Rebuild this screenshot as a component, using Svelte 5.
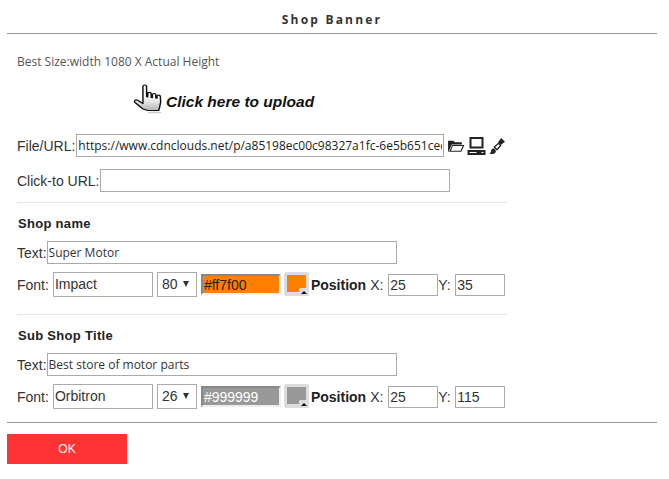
<script>
	let { title = 'Shop Banner' } = $props();

	const sections = [
		{ heading: 'Shop name', text: 'Super Motor', font: 'Impact', size: '80', color: '#ff7f00', ink: '#222', x: '25', y: '35' },
		{ heading: 'Sub Shop Title', text: 'Best store of motor parts', font: 'Orbitron', size: '26', color: '#999999', ink: '#fff', x: '25', y: '115' }
	];
</script>

<div class="dialog">
	<h1>{title}</h1>

	<div class="body">
		<p class="hint">Best Size:width 1080 X Actual Height</p>

		<div class="upload">
			<svg width="34" height="30" viewBox="0 0 28 30" preserveAspectRatio="none">
				<defs>
					<linearGradient id="palm" x1="0" y1="0" x2="0" y2="1">
						<stop offset="0.45" stop-color="#fff" />
						<stop offset="1" stop-color="#b5b5b5" />
					</linearGradient>
				</defs>
				<path d="M9 2.500c0-2 3-2 3 0v10l1 .5V9.500c0-1.600 2.800-1.600 2.800 0v4l1 .2v-3c0-1.600 2.800-1.600 2.800 0v3.300l1 .2v-2c0-1.500 2.700-1.500 2.700 0 .6 3.500.4 8-.7 11.800l-.6 2.500H13L9 25 2.500 18.500c-1.400-1.600.4-3.500 2.200-2.300L9 19.500z" fill="url(#palm)" stroke="#111" stroke-width="1.200" stroke-linejoin="round" />
				<path d="M13 28.500h11" stroke="#ccc" stroke-width="1.500" />
			</svg>
			<span>Click here to upload</span>
		</div>

		<div class="row file-row">
			<label for="file-url">File/URL:</label>
			<input id="file-url" class="url" value="https://www.cdnclouds.net/p/a85198ec00c98327a1fc-6e5b651ced" />
			<span class="tools">
				<svg width="18" height="15" viewBox="0 0 17 14">
					<path d="M1 13V2.500h5l1.500 1.500H14v2H4.500L1.500 13zM2 13h11.500L16.500 6.500H5z" fill="#222" />
					<path d="M5.500 7.500h9.300l-2 4.500H3.700z" fill="#fff" />
				</svg>
				<svg width="21" height="20" viewBox="0 0 20 20">
					<path d="M3 1h14v11.500H3zM5 3v7.500h10V3z" fill="#222" fill-rule="evenodd" />
					<path d="M1 14h18v5H1z" fill="#222" />
					<path d="M3 16h7v1H3zM15 16h2v1h-2z" fill="#fff" />
				</svg>
				<svg width="18" height="18" viewBox="0 0 17 17">
					<path d="M1 15.500c1.500-.2 2-1.500 2-3 .5-1.500 2-2 3.300-1.500l1 1.500c.4 1.500-.3 2.800-2 3.300-1.500.3-3 .2-4.300-.3z" fill="#222" />
					<path d="M6 9.500l4-3.500 2 2-3.500 4z" fill="#fff" stroke="#222" stroke-width="1.200" />
					<path d="M9.500 5l3-4 3.500 3.500-4 3z" fill="#222" />
				</svg>
			</span>
		</div>

		<div class="row link-row">
			<label for="click-url">Click-to URL:</label>
			<input id="click-url" class="link" />
		</div>

		{#each sections as s}
			<section>
				<h2>{s.heading}</h2>
				<div class="row text-row">
					<span>Text:</span>
					<input class="text" value={s.text} />
				</div>
				<div class="row font-row">
					<span>Font:</span>
					<input class="font" value={s.font} />
					<span class="select">{s.size}<i></i></span>
					<input class="color" value={s.color} style="background: {s.color}; color: {s.ink}" />
					<span class="swatch" style="background: {s.color}"><i></i></span>
					<strong>Position</strong>
					<span class="axis-x">X:</span>
					<input class="pos" value={s.x} />
					<span class="axis-y">Y:</span>
					<input class="pos" value={s.y} />
				</div>
			</section>
		{/each}
	</div>

	<div class="footer">
		<button>OK</button>
	</div>
</div>

<style>
	:global(body) {
		background: #fff;
	}

	.dialog {
		width: 650px;
		margin-left: 7px;
		font-family: "Liberation Sans", Arial, sans-serif;
		font-size: 14px;
		color: #333;
	}

	h1 {
		margin: 0;
		height: 33px;
		line-height: 39px;
		box-sizing: content-box;
		border-bottom: 1px solid #999;
		text-align: center;
		font-family: "Open Sans", sans-serif;
		font-size: 12px;
		font-weight: 700;
		letter-spacing: 2.200px;
		color: #333;
	}

	.body {
		padding-left: 10px;
		width: 490px;
	}

	.hint {
		margin: 0;
		padding-top: 20px;
		line-height: 15px;
		font-family: "Open Sans", sans-serif;
		font-size: 12px;
		color: #555;
	}

	.upload {
		display: flex;
		align-items: center;
		height: 37px;
		margin-top: 14px;
		padding-left: 115px;
	}

	.upload svg {
		margin-top: -5px;
	}

	.upload span {
		font-weight: 700;
		font-style: italic;
		font-size: 15.500px;
		color: #111;
	}

	.row {
		display: flex;
		align-items: center;
		white-space: nowrap;
	}

	input {
		box-sizing: border-box;
		border: 1px solid #aaa;
		border-radius: 0;
		outline: none;
		padding: 0 1px;
		margin: 0;
		font-family: "Open Sans", sans-serif;
		font-size: 12px;
		color: #333;
		background: #fff;
	}

	.file-row {
		margin-top: 14px;
		height: 23px;
	}

	.url {
		width: 368px;
		height: 23px;
		margin-left: 1px;
		color: #222;
		overflow: hidden;
	}

	.tools {
		display: flex;
		align-items: center;
		gap: 1px;
		margin-left: 3px;
	}

	.link-row {
		margin-top: 12px;
		height: 23px;
	}

	.link {
		width: 350px;
		height: 23px;
		margin-left: 1px;
	}

	section {
		margin-top: 10px;
		border-top: 1px solid #e6e6e6;
		padding-top: 12px;
		padding-left: 1px;
	}

	section + section {
		margin-top: 17px;
	}

	h2 {
		margin: 1px 0 -1px;
		font-size: 13px;
		font-weight: 700;
		line-height: 16px;
		letter-spacing: 0.300px;
		color: #222;
	}

	.text-row {
		margin-top: 10px;
		height: 23px;
		margin-left: -1px;
	}

	.text {
		width: 350px;
		height: 23px;
	}

	.font-row {
		margin-top: 8px;
		height: 25px;
		margin-left: -1px;
	}

	.font {
		width: 100px;
		height: 25px;
		margin-left: 4px;
		padding-bottom: 2px;
		font-family: "Liberation Sans", Arial, sans-serif;
		font-size: 14px;
	}

	.select {
		box-sizing: border-box;
		position: relative;
		width: 40px;
		height: 25px;
		line-height: 22px;
		margin-left: 4px;
		padding-left: 4px;
		border: 1px solid #aaa;
	}

	.select i {
		position: absolute;
		right: 7px;
		top: 8px;
		border-left: 3px solid transparent;
		border-right: 3px solid transparent;
		border-top: 6px solid #333;
	}

	.color {
		width: 80px;
		height: 21px;
		margin-left: 4px;
		padding: 0 1px;
		font-family: "Liberation Sans", Arial, sans-serif;
		font-size: 14px;
		border: 2px solid #eee;
		border-top-color: #888;
		border-left-color: #888;
	}

	.swatch {
		box-sizing: border-box;
		position: relative;
		width: 25px;
		height: 24px;
		margin-left: 3px;
		margin-top: -2px;
		border: 3px solid #ddd;
		border-bottom-width: 4px;
		border-radius: 2px;
	}

	.swatch i {
		position: absolute;
		right: -3px;
		bottom: -4px;
		width: 10px;
		height: 8px;
		background: #ddd;
		border-top-left-radius: 1px;
	}

	.swatch i::after {
		content: '';
		position: absolute;
		left: 2px;
		top: 3px;
		border-left: 3px solid transparent;
		border-right: 3px solid transparent;
		border-bottom: 3px solid #111;
	}

	strong {
		margin-left: 2px;
		color: #222;
	}

	.axis-x {
		margin-left: 4px;
		width: 18px;
	}

	.axis-y {
		width: 17px;
	}

	.pos {
		width: 50px;
		height: 22px;
		font-family: "Liberation Sans", Arial, sans-serif;
		font-size: 14px;
	}

	.footer {
		margin-top: 13px;
		border-top: 1px solid #999;
		padding-top: 11px;
	}

	button {
		display: block;
		width: 120px;
		height: 30px;
		border: 0;
		padding: 0;
		background: #ff3333;
		color: #fff;
		font-family: inherit;
		font-size: 12px;
	}
</style>
